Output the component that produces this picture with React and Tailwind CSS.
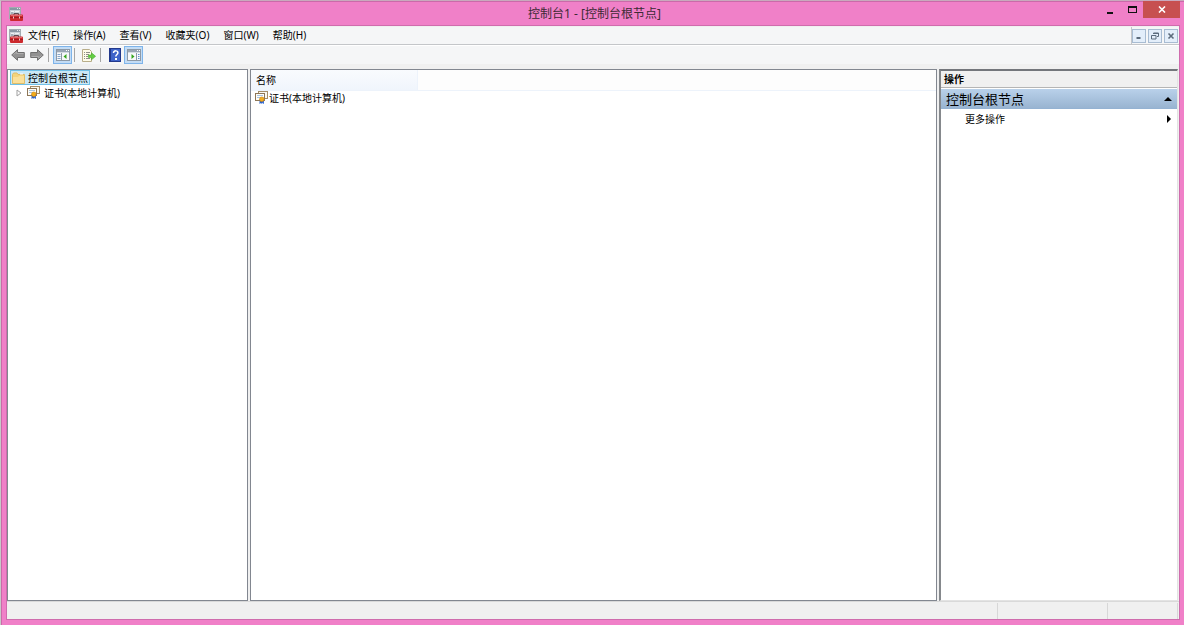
const menus = ["文件(F)", "操作(A)", "查看(V)", "收藏夹(O)", "窗口(W)", "帮助(H)"];

function ConsoleIcon({ className }) {
  return (
    <svg className={className} width="14" height="14" viewBox="0 0 14 14" aria-hidden="true">
      <rect x="0.5" y="0.5" width="11" height="11" fill="#c9d2d8" stroke="#a3abb1" />
      <rect x="1" y="1" width="10" height="2" fill="#8998a4" />
      <path d="M8 1.5h1M10 1.5h1" stroke="#e3e8ec" />
      <path d="M2 4.5h3M6 4.5h4" stroke="#eef2f4" />
      <path d="M2 6h2" stroke="#7e8b96" />
      <path d="M5 8V6.500h4.500V8" fill="none" stroke="#5d4a50" />
      <rect x="1" y="7.500" width="13" height="6.500" rx="1" fill="#cc2a2e" />
      <path d="M2 8.500h11" stroke="#e2696c" />
      <path d="M1 10.500h13" stroke="#a11c21" />
      <path d="M4.500 9.500v2M10.500 9.500v2" stroke="#f0c9ca" />
    </svg>
  );
}

function FolderIcon() {
  return (
    <svg width="13" height="12" viewBox="0 0 13 12" aria-hidden="true">
      <path d="M0.5 11.5V2.5L1.5 1H5l1 1.5h6.5v9z" fill="#f3d37c" stroke="#dfbd68" />
      <path d="M1 11V5h5l1-1h5v7z" fill="#fae09a" />
      <path d="M8 2h3" stroke="#fff" />
    </svg>
  );
}

function CertificateIcon() {
  return (
    <svg width="13" height="13" viewBox="0 0 13 13" aria-hidden="true">
      <rect x="3.5" y="0.5" width="9" height="7" fill="#fbf8ef" stroke="#a58d68" />
      <rect x="0.5" y="2.5" width="9" height="7" fill="#fffdf7" stroke="#8d7657" />
      <path d="M2 4.5h6M2 6.5h3" stroke="#a9c4e0" />
      <path d="M4.5 9v4l1.5-1 1 1V9z" fill="#2f63c4" />
      <path d="M7 9v3l2 1V9z" fill="#3b70d6" />
      <circle cx="6.800" cy="8.300" r="2.300" fill="#f3ad1d" stroke="#c97f0a" strokeWidth="0.600" />
    </svg>
  );
}

function Arrow({ flip }) {
  return (
    <svg width="14" height="12" viewBox="0 0 14 12" className={flip ? "rotate-180" : ""} aria-hidden="true">
      <path d="M0.7 6L6.5 0.7V3.5h6.8v5H6.5v2.8z" fill="#929292" stroke="#707070" />
      <path d="M2.5 5.5L5.5 3v1.5h7" fill="none" stroke="#adadad" />
    </svg>
  );
}

function PaneIcon({ right }) {
  return (
    <svg width="14" height="12" viewBox="0 0 14 12" aria-hidden="true">
      <rect x="0.5" y="0.5" width="13" height="11" fill="#f7f8fa" stroke="#8d99a6" />
      <rect x="1" y="1" width="12" height="2" fill="#9aa6b5" />
      <path d="M10 1.5h1M12 1.5h1" stroke="#fff" />
      <path d="M1 3.5h12" stroke="#d6dce4" />
      {right ? (
        <>
          <path d="M9.5 4v7" stroke="#8d99a6" />
          <path d="M11 5.5h1.5M11 7.5h1.5M11 9.5h1.5" stroke="#5c8fd0" />
          <path d="M4.5 5v5l3-2.5z" fill="#35a51c" />
        </>
      ) : (
        <>
          <path d="M5.5 4v7" stroke="#8d99a6" />
          <path d="M1.5 5.5h3M1.5 7.5h3M1.5 9.5h3" stroke="#86a6cb" />
          <path d="M10.5 5v5l-3-2.5z" fill="#35a51c" />
        </>
      )}
    </svg>
  );
}

function ExportIcon() {
  return (
    <svg width="14" height="13" viewBox="0 0 14 13" aria-hidden="true">
      <path d="M0.5 0.5h7l2 2v10h-9z" fill="#fefbe8" stroke="#b9ae8a" />
      <path d="M2 3.5h1M4 3.5h4M2 5.5h1M4 5.5h3M2 7.5h1M4 7.5h2M2 9.5h1M4 9.5h4" stroke="#8f8f88" />
      <path d="M6.5 6h3V3.8L13.6 7.3 9.5 10.8V8.6h-3z" fill="#63cf43" stroke="#46a92c" strokeWidth="0.6" />
    </svg>
  );
}

function HelpIcon() {
  return (
    <svg width="12" height="14" viewBox="0 0 12 14" aria-hidden="true">
      <rect x="0.5" y="0.5" width="11" height="13" fill="#3f63c9" stroke="#22398c" />
      <path d="M1.5 1v12" stroke="#22398c" />
      <path d="M4.5 5c0-3 4.4-2.6 4.4-.2C8.900 6.500 6.800 6.500 6.800 8.500" fill="none" stroke="#fff" strokeWidth="1.5" />
      <rect x="6" y="10" width="2" height="2" fill="#fff" />
    </svg>
  );
}

function ToolButton({ label, active, children }) {
  return (
    <button
      aria-label={label}
      className={
        "flex h-[18px] w-[19px] shrink-0 items-center justify-center border " +
        (active ? "border-[#7eb4ea] bg-[#c3dcf5]" : "border-transparent")
      }
    >
      {children}
    </button>
  );
}

function Separator() {
  return <span className="mr-1 ml-[2px] h-[14px] w-px bg-[#a5a5a5]" />;
}

function TitleBar() {
  return (
    <header className="flex h-6 shrink-0 items-start">
      <div className="flex flex-1 items-center self-center pt-px pl-[3px]">
        <ConsoleIcon />
      </div>
      <h1 className="self-center pt-[2px] text-xs text-[#3c2a35]">控制台1 - [控制台根节点]</h1>
      <div className="flex flex-1 justify-end">
        <button aria-label="最小化" className="flex h-[17px] w-[22px] items-center justify-center pt-[2px]">
          <svg width="8" height="7" viewBox="0 0 8 7"><path d="M1 6h6" stroke="#111" strokeWidth="2" /></svg>
        </button>
        <button aria-label="最大化" className="flex h-[17px] w-[22px] items-center justify-center">
          <svg width="9" height="7" viewBox="0 0 9 7"><path d="M0.5 0v7M8.5 0v7M0 6.5h9" stroke="#111" /><path d="M0 1h9" stroke="#111" strokeWidth="2" /></svg>
        </button>
        <button aria-label="关闭" className="flex h-[17px] w-[37px] items-center justify-center bg-[#c75050]">
          <svg width="8" height="7" viewBox="0 0 8 7"><path d="M1 0.5L7 6.5M7 0.5L1 6.5" stroke="#fff" strokeWidth="1.6" /></svg>
        </button>
      </div>
    </header>
  );
}

function ChildButton({ label, children }) {
  return (
    <button aria-label={label} className="flex h-[14px] w-[14px] items-center justify-center border border-[#a8bcd2] bg-[#e3eefa]">
      <svg width="8" height="8" viewBox="0 0 8 8" fill="none" stroke="#5b6b7c">{children}</svg>
    </button>
  );
}

function MenuBar() {
  return (
    <nav className="flex h-[18px] shrink-0 items-center border-b border-[#c4c6c9] bg-[#f5f6f7]">
      <ConsoleIcon className="ml-[2px]" />
      <div className="ml-[5px] flex flex-1 gap-[14px] pb-[2px]">
        {menus.map((m) => (
          <button key={m} className="whitespace-nowrap">{m}</button>
        ))}
      </div>
      <div className="flex h-full items-center gap-[2px] border-l border-[#c4c6c9] pr-px">
        <ChildButton label="最小化子窗口"><path d="M1.5 6h4" strokeWidth="2" /></ChildButton>
        <ChildButton label="还原子窗口">
          <path d="M2.5 2V1h5v3.5H6M2 1.5h5" />
          <path d="M0.5 3.5h4.5v3.5h-4.5z" />
        </ChildButton>
        <ChildButton label="关闭子窗口"><path d="M1.5 1.5l5 5M6.5 1.5l-5 5" strokeWidth="1.6" /></ChildButton>
      </div>
    </nav>
  );
}

function ToolBar() {
  return (
    <div className="flex h-[18px] shrink-0 items-center bg-[#f5f6f7] pl-px">
      <ToolButton label="后退"><Arrow /></ToolButton>
      <ToolButton label="前进"><Arrow flip /></ToolButton>
      <Separator />
      <ToolButton label="显示控制台树" active><PaneIcon /></ToolButton>
      <Separator />
      <ToolButton label="导出列表"><ExportIcon /></ToolButton>
      <Separator />
      <ToolButton label="帮助"><HelpIcon /></ToolButton>
      <ToolButton label="显示操作窗格" active><PaneIcon right /></ToolButton>
    </div>
  );
}

function TreePane() {
  return (
    <aside className="w-[241px] shrink-0 border border-[#828790] bg-white pl-[2px]">
      <button className="flex h-[15px] items-center gap-[3px] border border-[#70c0e7] bg-[#cbe8f6] px-px">
        <FolderIcon />
        <span>控制台根节点</span>
      </button>
      <button className="flex h-[15px] items-center pl-[6px]">
        <svg width="6" height="8" viewBox="0 0 6 8" className="mr-[5px]">
          <path d="M1 1v6l4-3z" fill="#fff" stroke="#a0a0a0" />
        </svg>
        <CertificateIcon />
        <span className="ml-1">证书(本地计算机)</span>
      </button>
    </aside>
  );
}

function ListPane() {
  return (
    <main className="min-w-0 flex-1 border border-[#828790] bg-white">
      <table className="w-full table-fixed border-collapse text-left">
        <thead>
          <tr className="h-5 border-b border-[#edf3fb]">
            <th className="w-[166px] border-r border-[#edf3fb] bg-linear-to-b from-[#f9fbfe] to-[#f0f5fc] p-0 pl-[5px] font-normal">名称</th>
            <td className="bg-[#fdfdfd] p-0" />
          </tr>
        </thead>
        <tbody>
          <tr>
            <td colSpan={2} className="p-0 pl-1">
              <div className="flex h-[14px] items-center gap-px">
                <CertificateIcon />
                <span>证书(本地计算机)</span>
              </div>
            </td>
          </tr>
        </tbody>
      </table>
    </main>
  );
}

function ActionsPane() {
  return (
    <aside className="mr-px w-[239px] shrink-0 border-t-2 border-r border-b border-l-2 border-t-[#73767b] border-r-[#e3e3e3] border-b-[#e3e3e3] border-l-[#85888c] bg-white">
      <h2 className="flex h-[17px] items-center border-b border-[#b5b5b5] bg-[#f0f0f0] pl-[3px] font-bold">操作</h2>
      <button className="mt-px flex h-5 w-full items-center justify-between border-b border-[#94b2d2] bg-linear-to-b from-[#b9d1ea] to-[#99b4d1] pr-[5px] pl-[5px] text-[13px]">
        <span>控制台根节点</span>
        <svg width="8" height="4" viewBox="0 0 8 4"><path d="M0 4h8L4 0z" /></svg>
      </button>
      <button className="flex h-5 w-full items-center justify-between pr-[6px] pl-6">
        <span>更多操作</span>
        <svg width="4" height="8" viewBox="0 0 4 8"><path d="M0 0v8l4-4z" /></svg>
      </button>
    </aside>
  );
}

export default function App() {
  return (
    <div className="flex h-screen flex-col border-t border-l border-t-[#c9a9bd] border-l-[#c8c8c8] bg-[#f080c8] pr-1 pb-[5px] pl-[5px] font-['Noto_Sans','Noto_Sans_CJK_SC',sans-serif] text-[10px] leading-[14px] text-black shadow-[inset_1px_1px_0_#cb6aa9]">
      <TitleBar />
      <div className="flex min-h-0 flex-1 flex-col border border-[#cf6cad] bg-[#f0f0f0] pt-px">
        <MenuBar />
        <div className="h-px shrink-0 bg-white" />
        <ToolBar />
        <div className="mt-[5px] flex min-h-0 flex-1 gap-[2px]">
          <TreePane />
          <ListPane />
          <ActionsPane />
        </div>
        <footer className="flex h-[18px] shrink-0 border-t border-[#d9d9d9] pt-px">
          <div className="flex-1 border-r border-[#d7d7d7]" />
          <div className="w-[110px] border-r border-[#d7d7d7]" />
          <div className="mr-px w-[70px] border-r border-[#d7d7d7]" />
        </footer>
      </div>
    </div>
  );
}
